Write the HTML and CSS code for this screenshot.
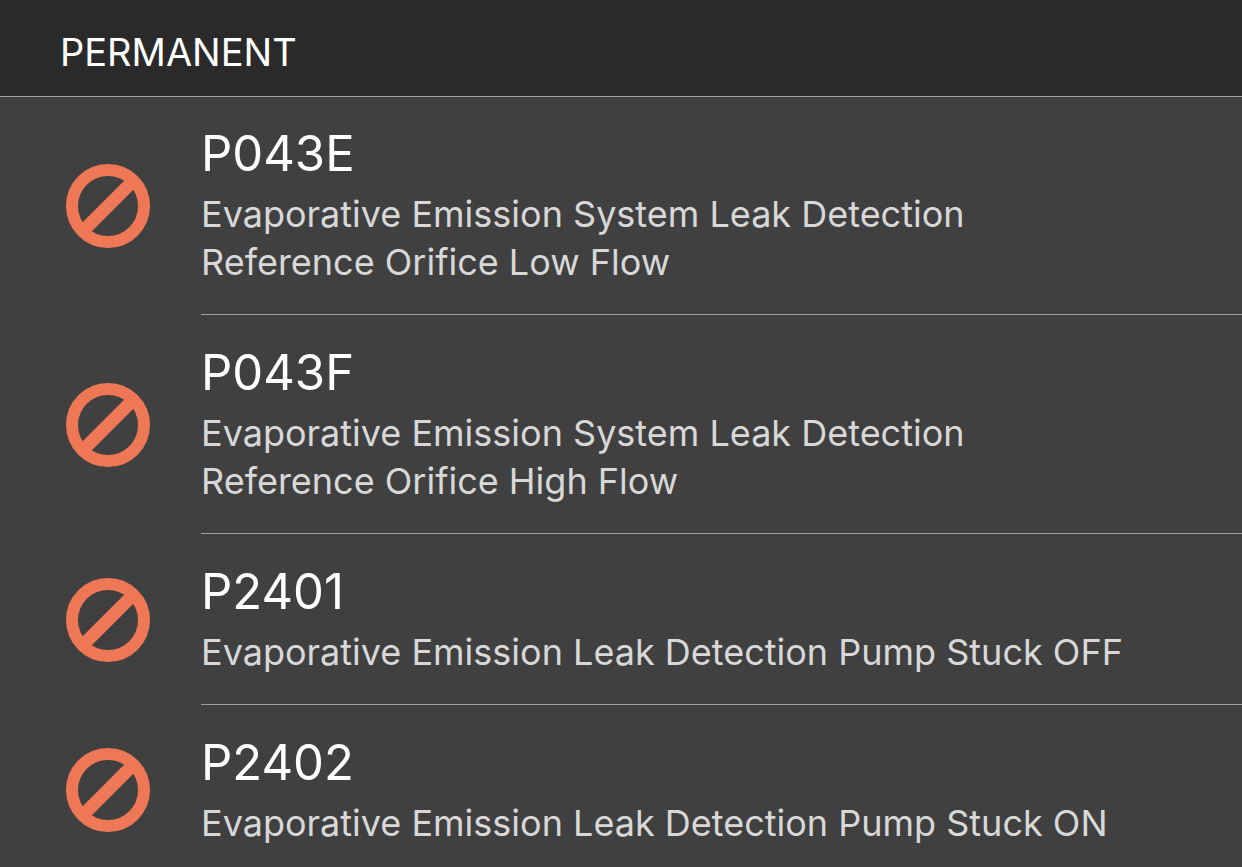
FILE: index.html
```html
<!DOCTYPE html>
<html lang="en">
<head>
    <meta charset="UTF-8">
    <meta name="viewport" content="width=device-width, initial-scale=1.0">
    <title>Trouble Codes</title>
    <link rel="stylesheet" href="styles.css">
</head>
<body>
    <svg class="sprite" aria-hidden="true">
        <symbol id="ban" viewBox="0 0 84 84">
            <circle cx="42" cy="42" r="36" fill="none" stroke="currentColor" stroke-width="12"/>
            <path d="M17 67 67 17" stroke="currentColor" stroke-width="13"/>
        </symbol>
        <symbol id="chevron" viewBox="0 0 16 28">
            <path d="M2 2 14 14 2 26" fill="none" stroke="currentColor" stroke-width="3"/>
        </symbol>
    </svg>

    <h1 class="section-title">PERMANENT</h1>

    <ul class="codes">
        <li class="code">
            <svg class="icon" aria-hidden="true"><use href="#ban"/></svg>
            <div class="details">
                <div class="text">
                    <h2>P043E</h2>
                    <p>Evaporative Emission System Leak Detection Reference Orifice Low Flow</p>
                </div>
                <svg class="chevron" aria-hidden="true"><use href="#chevron"/></svg>
            </div>
        </li>
        <li class="code">
            <svg class="icon" aria-hidden="true"><use href="#ban"/></svg>
            <div class="details">
                <div class="text">
                    <h2>P043F</h2>
                    <p>Evaporative Emission System Leak Detection Reference Orifice High Flow</p>
                </div>
                <svg class="chevron" aria-hidden="true"><use href="#chevron"/></svg>
            </div>
        </li>
        <li class="code">
            <svg class="icon" aria-hidden="true"><use href="#ban"/></svg>
            <div class="details">
                <div class="text">
                    <h2>P2401</h2>
                    <p>Evaporative Emission Leak Detection Pump Stuck OFF</p>
                </div>
                <svg class="chevron" aria-hidden="true"><use href="#chevron"/></svg>
            </div>
        </li>
        <li class="code">
            <svg class="icon" aria-hidden="true"><use href="#ban"/></svg>
            <div class="details">
                <div class="text">
                    <h2>P2402</h2>
                    <p>Evaporative Emission Leak Detection Pump Stuck ON</p>
                </div>
                <svg class="chevron" aria-hidden="true"><use href="#chevron"/></svg>
            </div>
        </li>
    </ul>
</body>
</html>
```
FILE: styles.css
```css
* {
    box-sizing: border-box;
}
body {
    margin: 0;
    background: #404040;
    color: #fff;
    font-family: Inter, "Liberation Sans", sans-serif;
    overflow-x: hidden;
}
/* hide the scrollbar, the list still scrolls */
html {
    scrollbar-width: none;
}
.sprite {
    display: none;
}
.section-title {
    margin: 0;
    padding: 28px 60px 20px;
    background: #2a2a2a;
    border-bottom: 1px solid #a0a0a0;
    font-size: 38px;
    font-weight: 400;
    line-height: 48px;
}
.codes {
    list-style: none;
    margin: -1px 0 0;
    padding: 0;
}
.code {
    display: flex;
    align-items: center;
    gap: 51px;
    padding-left: 66px;
}
.icon {
    flex: none;
    width: 84px;
    height: 84px;
    color: #ee7856;
}
.details {
    flex: 1;
    display: flex;
    align-items: center;
    gap: 32px;
    padding: 28px 68px 28px 0;
    border-bottom: 1px solid #a0a0a0;
}
.code:last-child .details {
    border-bottom: none;
}
.text {
    flex: 1;
}
.text h2 {
    margin: 0 0 6px;
    font-size: 49px;
    font-weight: 400;
    line-height: 60px;
}
.text p {
    margin: 0;
    color: #d8d8d8;
    font-size: 36px;
    line-height: 48px;
}
.chevron {
    flex: none;
    width: 16px;
    height: 28px;
    color: #3e3e40;
}
```
